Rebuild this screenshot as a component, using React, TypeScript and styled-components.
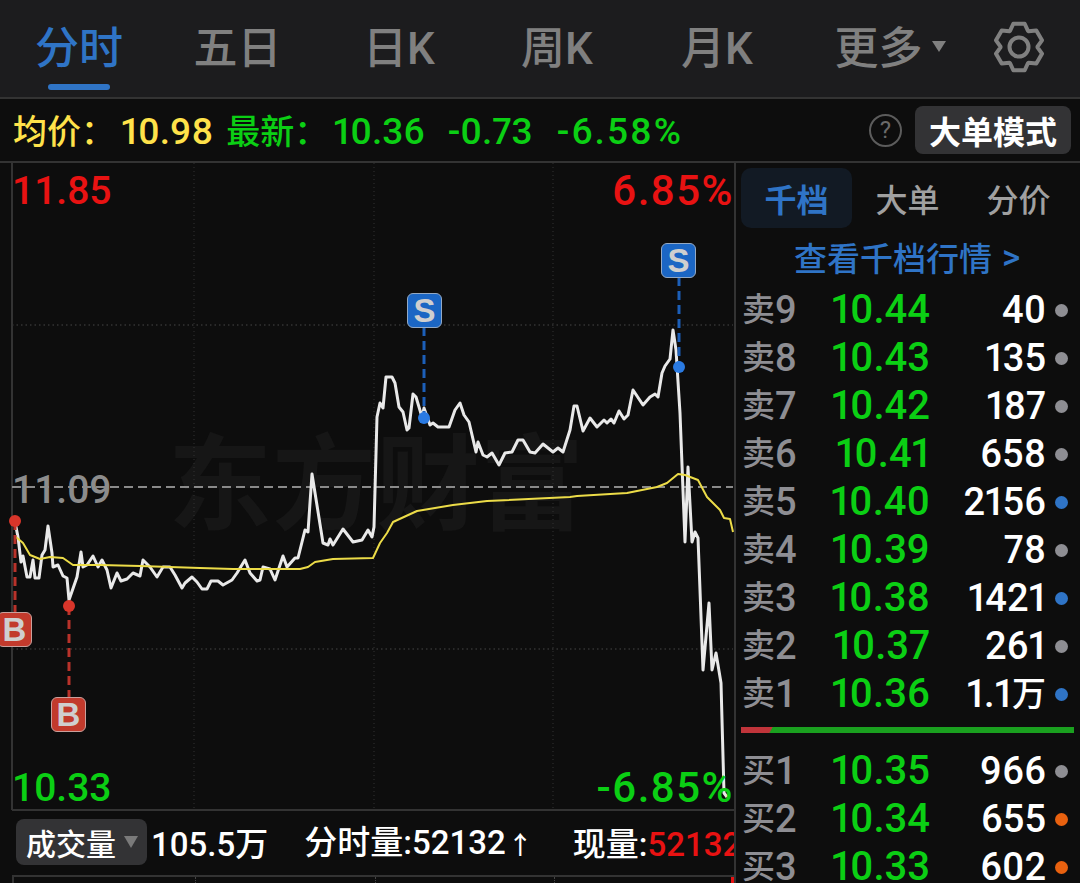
import React from "react";
import styled, { createGlobalStyle } from "styled-components";

const GREEN = "#0bcf14";
const RED = "#e81212";
const YELLOW = "#ffe24a";
const BLUE = "#2f74c6";
const GRAY = "#8e8e93";
const FONT = `Roboto, "Noto Sans CJK SC", sans-serif`;

const GlobalStyle = createGlobalStyle`
  html, body { margin: 0; padding: 0; background: #0d0d0d; }
  * { box-sizing: border-box; }
`;

const WHITE_LINE =
  "15,522 18,537 21,562 23,556 27,577 30,577 33,560 35,578 39,578 42,555 45,550 48,526 52,553 53,567 58,565 63,576 67,578 69,600 77,577 81,552 83,567 87,565 93,556 98,567 102,560 107,570 111,588 117,573 121,581 127,579 133,573 140,576 143,560 150,567 157,577 163,567 170,567 175,575 182,588 185,583 192,577 197,582 202,589 207,589 211,581 218,581 223,585 232,580 237,573 245,560 250,573 257,581 260,580 263,567 270,569 275,580 283,556 287,567 295,558 298,558 305,530 308,532 312,474 323,543 328,545 330,539 333,545 343,529 353,542 362,540 368,530 372,537 374,527 377,417 380,403 383,408 386,377 392,377 395,383 399,407 403,412 407,430 409,428 413,394 416,397 422,417 424,408 430,425 433,423 438,427 449,427 455,410 460,403 464,415 469,422 476,452 478,442 483,455 487,457 492,453 499,465 505,453 512,452 518,440 523,440 530,452 535,453 543,444 553,452 558,448 563,452 570,430 574,406 577,406 583,431 590,418 597,427 604,420 607,423 611,419 614,423 619,411 624,419 628,415 633,390 643,405 650,397 655,394 658,397 662,373 665,366 670,359 673,330 676,350 680,413 685,542 688,467 692,542 695,532 698,538 700,590 703,670 709,603 712,670 716,653 721,683 724,793 727,797";

const AVG_LINE =
  "16,537 23,543 30,555 40,559 50,557 63,558 73,565 100,565 140,566 170,567 200,568 233,569 300,569 308,567 315,562 333,559 373,558 380,543 387,533 393,522 417,511 453,505 487,501 570,497 577,496 627,493 657,487 667,483 678,474 685,475 698,480 707,497 720,510 724,518 730,519 733,532";

const askRows = [
  { label: "卖", level: "9", price: "10.44", qty: "40", dot: GRAY },
  { label: "卖", level: "8", price: "10.43", qty: "135", dot: GRAY },
  { label: "卖", level: "7", price: "10.42", qty: "187", dot: GRAY },
  { label: "卖", level: "6", price: "10.41", qty: "658", dot: GRAY },
  { label: "卖", level: "5", price: "10.40", qty: "2156", dot: BLUE },
  { label: "卖", level: "4", price: "10.39", qty: "78", dot: GRAY },
  { label: "卖", level: "3", price: "10.38", qty: "1421", dot: BLUE },
  { label: "卖", level: "2", price: "10.37", qty: "261", dot: GRAY },
  { label: "卖", level: "1", price: "10.36", qty: "1.1", unit: "万", dot: BLUE },
];

const bidRows = [
  { label: "买", level: "1", price: "10.35", qty: "966", dot: GRAY },
  { label: "买", level: "2", price: "10.34", qty: "655", dot: "#e8610f" },
  { label: "买", level: "3", price: "10.33", qty: "602", dot: "#e8610f" },
];

type Quote = { label: string; level: string; price: string; qty: string; unit?: string; dot: string };

// six tooth gear, flat tooth on top
function gearPath(cx: number, cy: number) {
  const pts: string[] = [];
  for (let i = 0; i < 6; i++) {
    const a = (i * Math.PI) / 3 - Math.PI / 2;
    [
      [18.5, -0.5],
      [24, -0.24],
      [24, 0.24],
      [18.5, 0.5],
    ].forEach(([r, d]) => {
      pts.push(`${(cx + r * Math.cos(a + d)).toFixed(1)},${(cy + r * Math.sin(a + d)).toFixed(1)}`);
    });
  }
  return pts.join(" ");
}

function QuoteLine({ q }: { q: Quote }) {
  return (
    <QuoteRow>
      <QuoteLabel>
        {q.label}
        <QuoteLevel>{q.level}</QuoteLevel>
      </QuoteLabel>
      <QuotePrice>{q.price}</QuotePrice>
      <QuoteQty>
        {q.qty}
        {q.unit && <QuoteUnit>{q.unit}</QuoteUnit>}
      </QuoteQty>
      <QuoteDot $color={q.dot} />
    </QuoteRow>
  );
}

export default function App() {
  return (
    <Page>
      <GlobalStyle />
      <TabBar>
        <Tab $active>分时</Tab>
        <Tab>五日</Tab>
        <Tab>日K</Tab>
        <Tab>周K</Tab>
        <Tab>月K</Tab>
        <Tab>
          更多<MoreArrow />
        </Tab>
        <GearWrap>
          <svg width="56" height="56" viewBox="0 0 56 56">
            <polygon points={gearPath(28, 28)} fill="none" stroke="#808080" strokeWidth="4" strokeLinejoin="round" />
            <circle cx="28" cy="28" r="9.5" fill="none" stroke="#808080" strokeWidth="4" />
          </svg>
        </GearWrap>
      </TabBar>

      <StatBar>
        <StatLabel $color={YELLOW}>均价：</StatLabel>
        <StatNum $color={YELLOW} $gap={6}>10.98</StatNum>
        <StatLabel $color={GREEN} $gap={13}>最新：</StatLabel>
        <StatNum $color={GREEN} $gap={5}>10.36</StatNum>
        <StatNum $color={GREEN} $gap={23}>-0.73</StatNum>
        <StatNum $color={GREEN} $gap={24} $wide>-6.58%</StatNum>
        <HelpIcon>?</HelpIcon>
        <ModeButton>大单模式</ModeButton>
      </StatBar>

      <Body>
        <ChartColumn>
          <ChartArea>
            <Watermark>东方财富</Watermark>
            <ChartSvg width="735" height="648" viewBox="0 163 735 648">
              <line x1="12" y1="163" x2="12" y2="810" stroke="#333" strokeWidth="2" />
              <line x1="12" y1="810" x2="735" y2="810" stroke="#333" strokeWidth="2" />
              {[194, 374, 553].map((x) => (
                <line key={x} x1={x} y1="163" x2={x} y2="810" stroke="#333" strokeDasharray="1 3" />
              ))}
              {[325, 649].map((y) => (
                <line key={y} x1="12" y1={y} x2="733" y2={y} stroke="#333" strokeWidth="1.5" strokeDasharray="1.5 3" />
              ))}
              <line x1="12" y1="487" x2="733" y2="487" stroke="#8a8a8a" strokeWidth="2" strokeDasharray="9 5" />
              <polyline points={WHITE_LINE} fill="none" stroke="#e9e9e9" strokeWidth="3" strokeLinejoin="round" />
              <polyline points={AVG_LINE} fill="none" stroke="#ecdc48" strokeWidth="2" strokeLinejoin="round" />
              <line x1="15" y1="521" x2="15" y2="612" stroke="#b8322a" strokeWidth="3" strokeDasharray="9 5" />
              <line x1="69" y1="606" x2="69" y2="697" stroke="#b8322a" strokeWidth="3" strokeDasharray="9 5" />
              <line x1="424" y1="327" x2="424" y2="418" stroke="#1c5fb8" strokeWidth="3" strokeDasharray="9 5" />
              <line x1="679" y1="277" x2="679" y2="367" stroke="#1c5fb8" strokeWidth="3" strokeDasharray="9 5" />
              <circle cx="15" cy="521" r="6" fill="#d8352a" />
              <circle cx="69" cy="606" r="6" fill="#d8352a" />
              <circle cx="424" cy="418" r="6" fill="#2a7ae2" />
              <circle cx="679" cy="367" r="6" fill="#2a7ae2" />
            </ChartSvg>
            <AxisLabel $y={8} $color={RED}>11.85</AxisLabel>
            <AxisLabel $y={8} $right $color={RED}>6.85%</AxisLabel>
            <AxisLabel $y={307} $color="#8c8c8c">11.09</AxisLabel>
            <AxisLabel $y={605} $color={GREEN}>10.33</AxisLabel>
            <AxisLabel $y={605} $right $color={GREEN}>-6.85%</AxisLabel>
            <Badge $x={-3} $y={449} $kind="buy">B</Badge>
            <Badge $x={51} $y={534} $kind="buy">B</Badge>
            <Badge $x={407} $y={130} $kind="sell">S</Badge>
            <Badge $x={661} $y={80} $kind="sell">S</Badge>
          </ChartArea>

          <VolumeRow>
            <VolumeSelect>
              成交量<SelectArrow />
            </VolumeSelect>
            <VolumeText $left={4}>105.5万</VolumeText>
            <VolumeText $left={36}>
              分时量:52132<UpArrow>↑</UpArrow>
            </VolumeText>
            <VolumeText $left={40}>
              现量:<RedNum>52132</RedNum>
            </VolumeText>
          </VolumeRow>

          <VolumeChart>
            <VolumeCell $w={182} />
            <VolumeCell $w={180} />
            <VolumeCell $w={179} />
            <VolumeTick />
          </VolumeChart>
        </ChartColumn>

        <Sidebar>
          <SideTabs>
            <SideTab $active>千档</SideTab>
            <SideTab>大单</SideTab>
            <SideTab>分价</SideTab>
          </SideTabs>
          <DepthLink>
            查看千档行情<LinkArrow>&gt;</LinkArrow>
          </DepthLink>
          {askRows.map((q) => (
            <QuoteLine key={q.label + q.level} q={q} />
          ))}
          <RatioBar />
          {bidRows.map((q) => (
            <QuoteLine key={q.label + q.level} q={q} />
          ))}
        </Sidebar>
      </Body>
    </Page>
  );
}

const Page = styled.div`
  width: 1080px;
  height: 883px;
  overflow: hidden;
  background: #0d0d0d;
  font-family: ${FONT};
`;

const TabBar = styled.div`
  height: 99px;
  display: grid;
  grid-template-columns: 158px 159px 164px 152px 168px 178px 80px;
  align-items: center;
  background: #1c1c1e;
  border-bottom: 2px solid #333;
`;

const Tab = styled.div<{ $active?: boolean }>`
  position: relative;
  text-align: center;
  font-size: 44px;
  font-weight: 500;
  line-height: 60px;
  color: ${(p) => (p.$active ? BLUE : "#808080")};
  white-space: nowrap;

  ${(p) =>
    p.$active &&
    `&::after {
      content: "";
      position: absolute;
      left: 48px;
      top: 65px;
      width: 62px;
      height: 6px;
      border-radius: 3px;
      background: ${BLUE};
    }`}
`;

const MoreArrow = styled.span`
  display: inline-block;
  width: 0;
  height: 0;
  margin-left: 9px;
  vertical-align: 12px;
  border-left: 7px solid transparent;
  border-right: 7px solid transparent;
  border-top: 11px solid #808080;
`;

const GearWrap = styled.div`
  display: flex;
  justify-content: center;
  margin-top: -4px;
`;

const StatBar = styled.div`
  height: 64px;
  display: flex;
  align-items: center;
  padding: 0 9px 0 13px;
  background: #0d0d0d;
  border-bottom: 2px solid #333;
`;

const StatLabel = styled.div<{ $color: string; $gap?: number }>`
  margin: 3px 0 0 ${(p) => p.$gap || 0}px;
  font-size: 34px;
  font-weight: 500;
  line-height: 44px;
  color: ${(p) => p.$color};
  white-space: nowrap;
`;

const StatNum = styled.div<{ $color: string; $gap?: number; $wide?: boolean }>`
  margin: 3px 0 0 ${(p) => p.$gap || 0}px;
  font-size: 37px;
  font-weight: 500;
  line-height: 44px;
  letter-spacing: ${(p) => (p.$wide ? "2px" : "0")};
  color: ${(p) => p.$color};
  white-space: nowrap;
  font-variant-numeric: proportional-nums;
`;

const HelpIcon = styled.div`
  width: 33px;
  height: 33px;
  margin-left: auto;
  margin-right: 13px;
  display: flex;
  align-items: center;
  justify-content: center;
  border: 2.5px solid #5c5c5c;
  border-radius: 50%;
  font-size: 24px;
  color: #6a6a6a;
`;

const ModeButton = styled.div`
  width: 156px;
  height: 48px;
  display: flex;
  align-items: center;
  justify-content: center;
  border-radius: 8px;
  background: #333335;
  font-size: 32px;
  font-weight: 700;
  color: #fff;
  white-space: nowrap;
`;

const Body = styled.div`
  display: flex;
  height: 720px;
`;

const ChartColumn = styled.div`
  width: 734px;
  flex: none;
  overflow: hidden;
`;

const ChartArea = styled.div`
  position: relative;
  height: 648px;
  overflow: hidden;
`;

const ChartSvg = styled.svg`
  position: absolute;
  left: 0;
  top: 0;
`;

const Watermark = styled.div`
  position: absolute;
  left: 168px;
  top: 264px;
  font-size: 104px;
  font-weight: 700;
  line-height: 120px;
  color: #161616;
  white-space: nowrap;
`;

const AxisLabel = styled.div<{ $y: number; $right?: boolean; $color: string }>`
  position: absolute;
  top: ${(p) => p.$y}px;
  ${(p) => (p.$right ? "right: 0; letter-spacing: 1.5px; font-size: 42px;" : "left: 12px; font-size: 39px;")}
  font-weight: 500;
  line-height: 40px;
  color: ${(p) => p.$color};
`;

const Badge = styled.div<{ $x: number; $y: number; $kind: "buy" | "sell" }>`
  position: absolute;
  left: ${(p) => p.$x}px;
  top: ${(p) => p.$y}px;
  width: 35px;
  height: 35px;
  display: flex;
  align-items: center;
  justify-content: center;
  border: 1.5px solid ${(p) => (p.$kind === "buy" ? "#c9a09c" : "#93a9c4")};
  border-radius: 6px;
  background: ${(p) => (p.$kind === "buy" ? "#c23a2c" : "#1b66c4")};
  font-family: "Liberation Sans", sans-serif;
  font-size: 33px;
  font-weight: 700;
  color: #cfcfcf;
`;

const VolumeRow = styled.div`
  height: 62px;
  display: flex;
  align-items: center;
  padding-left: 16px;
  white-space: nowrap;
`;

const VolumeSelect = styled.div`
  width: 131px;
  height: 46px;
  flex: none;
  display: flex;
  align-items: center;
  padding-left: 10px;
  border-radius: 8px;
  background: #333335;
  font-size: 30px;
  font-weight: 500;
  color: #fff;
`;

const SelectArrow = styled.span`
  width: 0;
  height: 0;
  margin-left: 8px;
  border-left: 7px solid transparent;
  border-right: 7px solid transparent;
  border-top: 12px solid #7a7a7a;
`;

const VolumeText = styled.div<{ $left: number }>`
  margin: 5px 0 0 ${(p) => p.$left}px;
  flex: none;
  font-size: 33px;
  font-weight: 500;
  line-height: 46px;
  color: #fff;
`;

const UpArrow = styled.span`
  margin-left: 2px;
  font-size: 25px;
`;

const RedNum = styled.span`
  color: ${RED};
`;

const VolumeChart = styled.div`
  display: flex;
  height: 8px;
  margin-top: 2px;
  margin-left: 12px;
  border-left: 2px solid #333;
  border-top: 2px solid #333;
`;

const VolumeCell = styled.div<{ $w: number }>`
  width: ${(p) => p.$w}px;
  border-right: 1px dotted #444;
`;

const VolumeTick = styled.div`
  width: 3px;
  margin-left: auto;
  background: ${RED};
`;

const Sidebar = styled.div`
  flex: 1;
  padding-top: 5px;
  border-left: 2px solid #333;
  overflow: hidden;
`;

const SideTabs = styled.div`
  display: grid;
  grid-template-columns: 111px 111px 111px;
  height: 60px;
  margin-left: 5px;
`;

const SideTab = styled.div<{ $active?: boolean }>`
  display: flex;
  align-items: center;
  justify-content: center;
  border-radius: 10px;
  background: ${(p) => (p.$active ? "#121a24" : "transparent")};
  font-size: 32px;
  font-weight: ${(p) => (p.$active ? 700 : 500)};
  color: ${(p) => (p.$active ? BLUE : "#a0a0a0")};
`;

const DepthLink = styled.div`
  height: 58px;
  display: flex;
  align-items: center;
  justify-content: center;
  padding-right: 2px;
  font-size: 33px;
  font-weight: 500;
  color: ${BLUE};
  white-space: nowrap;
`;

const LinkArrow = styled.span`
  margin-left: 10px;
  font-size: 35px;
`;

const QuoteRow = styled.div`
  display: grid;
  grid-template-columns: 80px 108px 116px 23px;
  align-items: center;
  height: 48px;
  padding-left: 6px;
  white-space: nowrap;
`;

const QuoteLabel = styled.div`
  display: flex;
  align-items: center;
  height: 44px;
  font-size: 33px;
  font-weight: 500;
  line-height: 44px;
  color: ${GRAY};
`;

const QuoteLevel = styled.span`
  font-size: 38px;
`;

const QuotePrice = styled.div`
  text-align: right;
  font-size: 40px;
  font-weight: 500;
  line-height: 44px;
  color: ${GREEN};
  font-variant-numeric: proportional-nums;
`;

const QuoteQty = styled.div`
  display: flex;
  justify-content: flex-end;
  align-items: center;
  height: 44px;
  font-size: 38px;
  font-weight: 500;
  line-height: 44px;
  color: #fff;
  font-variant-numeric: proportional-nums;
`;

const QuoteUnit = styled.span`
  font-size: 34px;
`;

const QuoteDot = styled.div<{ $color: string }>`
  width: 13px;
  height: 13px;
  justify-self: end;
  margin-right: 1px;
  border-radius: 50%;
  background: ${(p) => p.$color};
`;

const RatioBar = styled.div`
  width: 333px;
  height: 6px;
  margin: 9px 0 14px 5px;
  background: linear-gradient(120deg, #c0343a 27px, #1aa01f 28px);
`;
